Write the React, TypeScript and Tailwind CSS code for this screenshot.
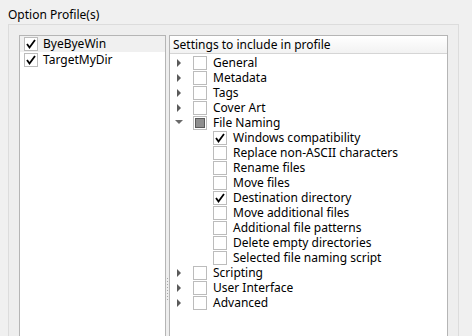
import React from 'react';

type Item = { label: string; state: 'on' | 'off' | 'partial'; level: 0 | 1; arrow?: 'closed' | 'open' };

const items: Item[] = [
  { label: 'General', state: 'off', level: 0, arrow: 'closed' },
  { label: 'Metadata', state: 'off', level: 0, arrow: 'closed' },
  { label: 'Tags', state: 'off', level: 0, arrow: 'closed' },
  { label: 'Cover Art', state: 'off', level: 0, arrow: 'closed' },
  { label: 'File Naming', state: 'partial', level: 0, arrow: 'open' },
  { label: 'Windows compatibility', state: 'on', level: 1 },
  { label: 'Replace non-ASCII characters', state: 'off', level: 1 },
  { label: 'Rename files', state: 'off', level: 1 },
  { label: 'Move files', state: 'off', level: 1 },
  { label: 'Destination directory', state: 'on', level: 1 },
  { label: 'Move additional files', state: 'off', level: 1 },
  { label: 'Additional file patterns', state: 'off', level: 1 },
  { label: 'Delete empty directories', state: 'off', level: 1 },
  { label: 'Selected file naming script', state: 'off', level: 1 },
  { label: 'Scripting', state: 'off', level: 0, arrow: 'closed' },
  { label: 'User Interface', state: 'off', level: 0, arrow: 'closed' },
  { label: 'Advanced', state: 'off', level: 0, arrow: 'closed' },
];

function Check({ state }: { state: 'on' | 'off' | 'partial' }) {
  return (
    <div className="w-[14px] h-[14px] shrink-0 border border-[#bcbcbc] bg-white flex items-center justify-center">
      {state === 'on' && (
        <svg width="12" height="12" viewBox="0 0 12 12">
          <path d="M2 6 L4.5 9.5 L10 2" fill="none" stroke="#000" strokeWidth="1.8" />
        </svg>
      )}
      {state === 'partial' && <div className="w-[10px] h-[10px] border border-[#5a5a5a] bg-[#8e8e8e]" />}
    </div>
  );
}

function Arrow({ kind }: { kind?: 'closed' | 'open' }) {
  return (
    <div className="w-[14px] h-[14px] flex items-center justify-center">
      {kind === 'closed' && (
        <svg width="5" height="8" viewBox="0 0 5 8">
          <path d="M0 0 L4 4 L0 8 Z" fill="#5a5a5a" />
        </svg>
      )}
      {kind === 'open' && (
        <svg width="8" height="5" viewBox="0 0 8 5">
          <path d="M0 0 L8 0 L4 4 Z" fill="#6a6a6a" />
        </svg>
      )}
    </div>
  );
}

export default function App() {
  return (
    <div
      className="w-[472px] h-[336px] overflow-hidden bg-[#f0f0f0] text-[12px] text-black"
      style={{ fontFamily: '"Noto Sans", "Open Sans", sans-serif' }}
    >
      <div className="pl-[8px] pt-[7px] h-[24px] leading-[16px]">Option Profile(s)</div>

      <div className="ml-[8px] w-[451px] h-[330px] border border-[#dcdcdc] bg-[#eeeeee] pl-[10px] pt-[10px] flex">
        {/* profiles list */}
        <div className="w-[147px] h-[320px] border border-[#b5b5b5] bg-white">
          <div className="h-[16px] flex items-center bg-[#f0f0f0] pl-[4px] gap-[5px]">
            <Check state="on" />
            <span className="leading-[16px]">ByeByeWin</span>
          </div>
          <div className="h-[16px] flex items-center pl-[4px] gap-[5px]">
            <Check state="on" />
            <span className="leading-[16px]">TargetMyDir</span>
          </div>
        </div>

        {/* splitter */}
        <div className="w-[3px] flex flex-col justify-start items-center pt-[243px] gap-[2px]">
          {Array.from({ length: 8 }).map((_, i) => (
            <div key={i} className="w-[1px] h-[1px] bg-[#a8a8a8]" />
          ))}
        </div>

        {/* settings tree */}
        <div className="w-[279px] h-[320px] border border-[#b5b5b5] bg-white">
          <div className="h-[18px] border-b border-[#d5d5d5] bg-gradient-to-b from-white to-[#f2f2f2] pl-[3px] leading-[18px]">
            Settings to include in profile
          </div>
          <div className="pt-[1px]">
            {items.map((it) => (
              <div
                key={it.label}
                className={`h-[15px] flex items-center ${it.level === 0 ? 'pl-[2px]' : 'pl-[43px]'}`}
              >
                {it.level === 0 && (
                  <>
                    <Arrow kind={it.arrow} />
                    <div className="w-[7px]" />
                  </>
                )}
                <Check state={it.state} />
                <span className="ml-[6px] leading-[15px] whitespace-nowrap">{it.label}</span>
              </div>
            ))}
          </div>
        </div>
      </div>
    </div>
  );
}
